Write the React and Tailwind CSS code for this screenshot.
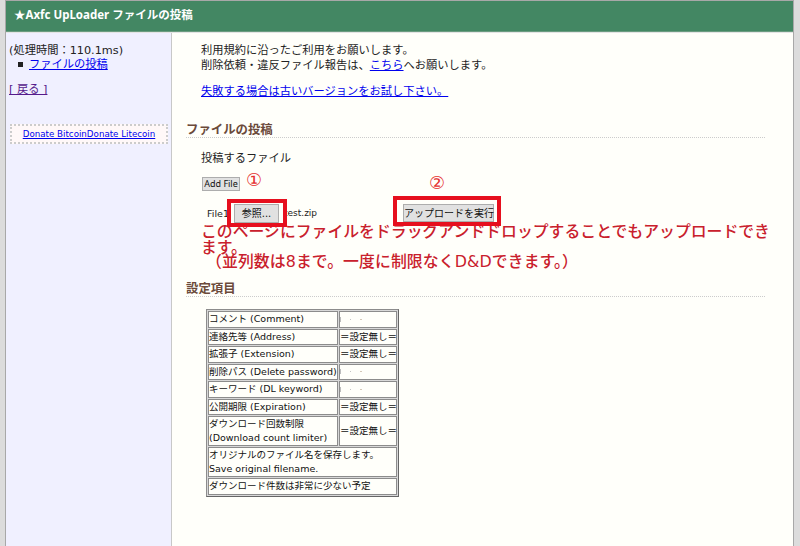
const font = "font-['DejaVu_Sans','Noto_Sans_CJK_JP',sans-serif]";

const rows = [
  ["コメント (Comment)", "specks"],
  ["連絡先等 (Address)", "＝設定無し＝"],
  ["拡張子 (Extension)", "＝設定無し＝"],
  ["削除パス (Delete password)", "specks"],
  ["キーワード (DL keyword)", "specks"],
  ["公開期限 (Expiration)", "＝設定無し＝"],
];

function Cell({ children, className = "", ...rest }) {
  return (
    <td className={"border border-[#8c8c8c] bg-[#fffffa] p-0 leading-[14px] text-[#111111] " + className} {...rest}>
      {children}
    </td>
  );
}

// 伏せ字の跡
function Specks() {
  return (
    <span className="flex items-center gap-[9px] h-[14px]">
      <span className="w-px h-[5px] bg-[#bdbdbd]" />
      <span className="w-px h-px bg-[#c4c4c4]" />
      <span className="w-[2px] h-px bg-[#d4c8b8]" />
    </span>
  );
}

function SectionTitle({ children, className = "" }) {
  return (
    <div className={"ml-[14px] mr-[28px] border-b border-dotted border-[#cccccc] h-[15px] text-[12.4px] leading-[13px] font-bold text-[#6b4a3a] " + className}>
      {children}
    </div>
  );
}

export default function App() {
  return (
    <div className={"w-[800px] h-[546px] overflow-hidden bg-[#dcdcdc] pl-[5px] pr-[6px] text-[11.25px] leading-[15px] text-[#222222] " + font}>
      <div className="h-full border-t border-x border-[#a8a8a8]">
        <div className="h-[31px] bg-[#438763] border-b border-[#6b9c80] pl-[8px] text-[11.5px] leading-[28px] font-bold text-white font-['Noto_Sans','Noto_Sans_CJK_JP',sans-serif]">
          ★Axfc UpLoader ファイルの投稿
        </div>
        <div className="flex h-[514px] border-t border-[#e4e4e4]">
          <aside className="w-[166px] shrink-0 bg-[#f0f0ff] border-r border-[#c8c8c8] pl-[3px] pt-[10px]">
            <div className="whitespace-nowrap">(処理時間：110.1ms)</div>
            <div className="flex items-center pl-[9px] gap-[6px] -mt-px">
              <span className="w-[5px] h-[5px] bg-[#222222]" />
              <a href="#" className="text-[#0000ee] underline">ファイルの投稿</a>
            </div>
            <a href="#" className="block mt-[10px] text-[#551a8b] underline">[ 戻る ]</a>
            <div className="mt-[27px] ml-px w-[158px] h-[20px] border-2 border-dotted border-[#cccccc] bg-[#fff8f8] text-center text-[8.7px] leading-[17px] whitespace-nowrap">
              <a href="#" className="text-[#0000ee] underline">Donate BitcoinDonate Litecoin</a>
            </div>
          </aside>
          <main className="relative flex-1 bg-[#fffffa] pt-[10px]">
            <div className="pl-[29px]">
              <p>利用規約に沿ったご利用をお願いします。</p>
              <p>
                削除依頼・違反ファイル報告は、<a href="#" className="text-[#0000ee] underline">こちら</a>へお願いします。
              </p>
              <p className="mt-[11px]">
                <a href="#" className="text-[#0000ee] underline">失敗する場合は古いバージョンをお試し下さい。</a>
              </p>
            </div>

            <SectionTitle className="mt-[24px]">ファイルの投稿</SectionTitle>

            <div className="pl-[29px] mt-[13px]">
              <p>投稿するファイル</p>
              <button className="block ml-px mt-[11px] w-[38px] h-[14px] bg-[#e1e1e1] border border-[#adadad] text-[9px] leading-[12px] text-[#111111] whitespace-nowrap font-['Noto_Sans',sans-serif]">
                Add File
              </button>
              <div className="flex items-center mt-[12px] h-[20px]">
                <span className="text-[9.5px] w-[33px] pl-[6px]">File1</span>
                <button className="w-[45px] h-[19px] bg-[#e1e1e1] border border-[#adadad] text-[10px] text-[#111111] leading-[15px]">
                  参照...
                </button>
                <span className="ml-[5px] w-[119px] text-[9px]">test.zip</span>
                <button className="w-[91px] h-[18px] bg-[#e1e1e1] border border-[#adadad] text-[10px] text-[#111111] leading-[15px] whitespace-nowrap">
                  アップロードを実行
                </button>
              </div>
              <div className="mt-[1px] pr-[13px] text-[15.85px] leading-[16px] font-medium text-[#c9202c]">
                <p>このページにファイルをドラッグアンドドロップすることでもアップロードできます。</p>
                <p className="-mt-[2px] pl-[5px] whitespace-nowrap tracking-[0.1px]">（並列数は8まで。一度に制限なくD&amp;Dできます。）</p>
              </div>
            </div>

            <SectionTitle className="mt-[12px]">設定項目</SectionTitle>

            <table className="ml-[34px] mt-[12px] w-[193px] table-fixed border-separate border-spacing-px border border-[#8c8c8c] border-r-[#666666] border-b-[#666666] bg-[#d8d8d8] text-[9.5px]">
              <tbody>
                {rows.map(([label, value]) => (
                  <tr key={label} className="h-[16.5px]">
                    <Cell className="w-[130px] whitespace-nowrap">{label}</Cell>
                    <Cell className="whitespace-nowrap">{value === "specks" ? <Specks /> : value}</Cell>
                  </tr>
                ))}
                <tr>
                  <Cell className="whitespace-nowrap">ダウンロード回数制限<br />(Download count limiter)</Cell>
                  <Cell className="whitespace-nowrap">＝設定無し＝</Cell>
                </tr>
                <tr>
                  <Cell colSpan={2} className="whitespace-nowrap">オリジナルのファイル名を保存します。<br />Save original filename.</Cell>
                </tr>
                <tr className="h-[16.5px]">
                  <Cell colSpan={2}>ダウンロード件数は非常に少ない予定</Cell>
                </tr>
              </tbody>
            </table>

            {/* 注釈 */}
            <span className="absolute left-[74px] top-[138px] text-[18px] leading-[18px] text-[#e53030]">①</span>
            <span className="absolute left-[257px] top-[141px] text-[18px] leading-[18px] text-[#e53030]">②</span>
            <div className="absolute left-[55px] top-[166px] w-[60px] h-[28px] border-[4px] border-[#e60f1e]" />
            <div className="absolute left-[221px] top-[163px] w-[108px] h-[30px] border-[4px] border-[#e60f1e]" />
          </main>
        </div>
      </div>
    </div>
  );
}
